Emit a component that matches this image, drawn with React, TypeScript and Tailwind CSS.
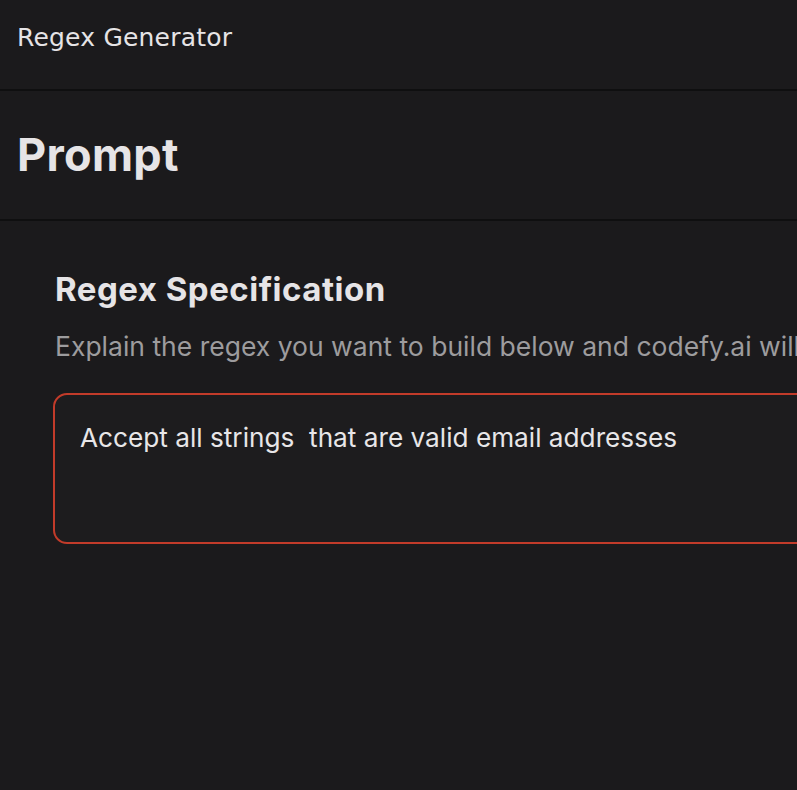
export default function App() {
  return (
    <div className="w-[797px] h-[790px] overflow-hidden bg-[#1b1a1c] text-[#e6e4e6]" style={{ fontFamily: "Inter, 'Noto Sans', sans-serif" }}>
      <div className="h-[91px] border-b-2 border-[#0f0f10] flex items-center pl-[17px]">
        <span className="text-[25px] tracking-[0.2px] leading-none -mt-[14px]" style={{ fontFamily: "'DejaVu Sans', sans-serif" }}>Regex Generator</span>
      </div>
      <div className="h-[130px] border-b-2 border-[#0f0f10] flex items-center pl-[17px]">
        <h1 className="text-[45px] font-bold leading-none tracking-[0.3px] -mt-[2px]">Prompt</h1>
      </div>
      <div className="pl-[55px] pt-[52px] whitespace-nowrap">
        <h2 className="text-[33px] font-bold leading-none tracking-[0.5px]">Regex Specification</h2>
        <p className="mt-[27px] text-[26.5px] text-[#9d9c9e] leading-none">Explain the regex you want to build below and codefy.ai will generate it for you.</p>
        <div className="mt-[33px] -ml-[2px] w-[800px] h-[151px] rounded-[14px] border-2 border-[#c23b2a] bg-[#1d1c1e] pl-[25px] pt-[30px]">
          <span className="text-[26.2px] leading-none text-[#e8e6e8]">Accept all strings&nbsp; that are valid email addresses</span>
        </div>
      </div>
    </div>
  );
}
